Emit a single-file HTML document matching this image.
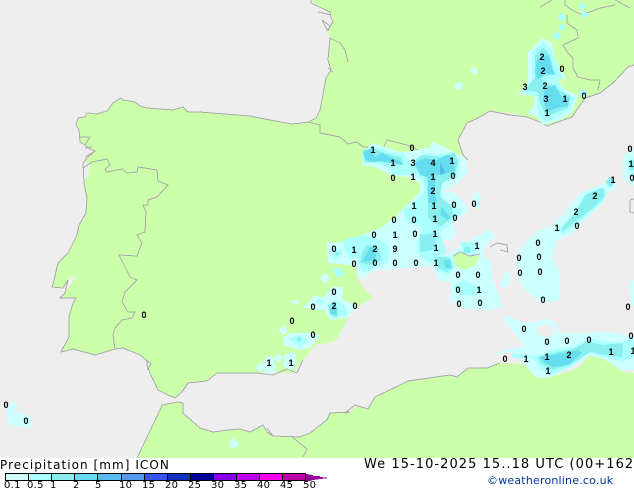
<!DOCTYPE html>
<html><head><meta charset="utf-8"><style>
html,body{margin:0;padding:0;background:#fff}
body{width:634px;height:490px;overflow:hidden;position:relative}
svg{position:absolute;left:0;top:0}
.l text{font:bold 9px "Liberation Sans",sans-serif;text-anchor:middle;fill:#000}
.t{position:absolute;white-space:nowrap;font-family:"DejaVu Sans",sans-serif;color:#000}
</style></head><body>
<svg width="634" height="490" viewBox="0 0 634 490">
<rect width="634" height="458" fill="#eeeeee"/>
<g fill="#ccffaa" shape-rendering="crispEdges">
<polygon points="311,0 634,0 634,65 628,67 613,83 600,93 585,98 572,117 547,126 540,122 527,117 510,113 490,111 480,117 467,123 458,140 463,155 468,170 442,190 420,200 395,222 375,240 358,262 355,267 358,280 365,290 373,298 355,308 347,320 338,337 333,342 315,345 302,362 293,373 267,372 250,373 217,373 207,381 188,383 182,392 175,398 168,395 158,390 150,373 147,365 147,369 151,364 140,355 123,348 115,349 95,355 73,349 61,352 69,337 69,317 73,303 76,298 60,298 65,293 77,275 68,280 63,288 52,287 54,280 58,263 68,253 77,235 79,225 86,213 87,198 84,183 88,175 90,165 85,160 90,155 95,151 90,149 85,145 80,142 79,130 76,125 78,118 85,117 87,113 97,114 107,111 113,103 121,98 123,100 135,102 140,106 147,108 173,110 183,107 188,112 200,112 250,116 270,120 292,124 308,121 316,118 320,110 322,100 326,78 331,70 328,60 330,38 327,30 333,22 332,15"/>
<polygon points="137,458 160,410 162,405 178,402 183,403 183,413 200,428 213,432 228,430 240,429 250,432 263,425 267,432 273,436 300,437 310,433 327,420 330,413 350,412 357,405 368,409 375,397 400,385 408,381 450,375 457,377 468,368 487,368 500,363 527,364 537,365 540,373 550,377 567,372 578,368 592,353 608,362 617,362 623,372 634,373 634,458"/>
</g>
<g fill="none" stroke="#aaaaaa" stroke-width="1" shape-rendering="crispEdges">
<path d="M311,0 311,3 330,12 331,18 333,22 329,28 327,30 322,20 330,26 M318,12 331,15 M329,28 328,31 M330,38 340,43 345,50 348,62 M330,38 328,60 331,70 326,78 322,100 320,110 316,118 309,122 292,124 270,120 250,116"/>
<path d="M328,68 333,72 M510,115 490,111 480,117 467,123 458,140 463,155 468,160 M200,112 188,112 183,107 173,110 147,108 140,106 135,102 123,100 121,98 113,103 107,111 97,114 87,113 85,117 78,118 76,125 79,130 80,142 85,145 90,149 95,151 88,157 83,163 84,183 87,198 86,213 79,225 77,235 68,253 58,263 54,280 52,287 63,288 68,280 65,293 60,298 76,298 73,303 69,317 69,337 61,352 73,349 95,355 115,349 123,348 140,355 151,364 147,370"/>
<path d="M80,137 90,137 85,145 80,142 M250,116 200,112 M85,148 92,147 M85,157 95,151 M147,360 147,365 150,373 158,390 168,395 175,398 182,392 188,383 207,381 217,373 257,373 273,375 287,369 297,373 303,360"/>
<path d="M83,168 92,162 107,159 110,165 105,169 107,172 122,169 127,173 137,172 138,167 157,170 158,181 168,185 157,197 148,200 148,205 143,205 146,212 145,232 137,235 142,243 137,256 119,255 125,267 130,277 137,280 125,292 122,302 128,312 135,312 132,318 122,320 115,328 113,335 115,349"/>
<path d="M308,122 320,125 320,133 340,137 348,144 357,142 363,147 383,148 387,140 407,145 422,152"/>
<path d="M137,458 160,410 162,405 178,402 183,403 183,413 200,428 213,432 228,430 240,429 250,432 263,425 267,432 273,436 300,437 310,433 327,420 330,413 350,412 345,413 355,405 368,409 375,397 400,385 408,381 450,375 457,377 468,368 487,368 500,363 M592,353 596,356 M267,428 273,436 M292,437 307,449 303,457"/>
<path d="M565,0 565,5 572,10 580,14 590,12 600,8 615,5 M567,15 567,23 577,30 578,38 563,45 568,53 573,58 573,68 578,77 590,80 600,80 598,90 M540,7 552,0 M615,0 630,8 M510,115 527,117 540,122 547,126 572,117 585,98 600,93 613,83 628,67 634,65"/>
<path d="M490,247 497,243 507,245 508,252 500,250 M630,200 630,212 634,213 M630,200 634,199"/>
</g>

<g shape-rendering="crispEdges">
<g fill="#ccffff">
<polygon points="362,153 372,143 385,147 400,152 414,151 430,147 432,142 440,145 450,150 465,158 468,172 455,185 442,191 455,193 468,207 467,213 453,222 456,233 449,243 455,250 470,240 477,237 490,228 495,237 487,243 482,255 490,260 493,280 500,297 502,307 487,310 463,308 450,300 452,283 438,280 433,265 420,267 375,270 360,280 355,267 350,265 328,263 327,242 340,243 357,237 382,227 395,217 405,207 420,192 420,183 408,177 390,175 375,167 362,165"/>
<polygon points="530,238 538,230 550,227 563,215 580,193 607,182 615,180 617,187 607,193 603,203 585,220 573,233 557,240 552,257 560,273 560,300 543,303 525,290 520,280 517,263 520,250"/>
<polygon points="505,315 512,318 522,322 537,322 543,318 555,322 558,333 570,333 590,333 607,332 617,333 634,337 634,370 620,370 607,360 590,355 570,368 548,378 535,377 523,362 513,352 490,355 505,350 525,346 512,330 505,322"/>
<polygon points="543,38 552,43 555,58 567,80 557,78 565,90 578,95 572,113 560,120 543,125 537,117 528,113 533,107 535,95 518,95 528,82 528,52"/>
<polygon points="303,307 315,295 323,298 332,287 343,287 343,300 357,305 353,312 347,318 330,320 325,310 313,310"/>
<polygon points="283,338 290,333 310,333 320,335 310,348 300,350 283,345"/>
<polygon points="325,273 330,278 325,284 320,278"/>
<polygon points="289,302 295,300 300,302 295,304"/>
<polygon points="278,330 283,326 288,330 283,335"/>
<polygon points="278,353 283,358 278,363 273,358"/>
<polygon points="266,356 272,356 276,366 276,372 268,374 262,368"/>
<polygon points="260,363 265,368 260,372 255,368"/>
<polygon points="285,354 295,352 297,365 290,370 283,366"/>
<polygon points="477,190 481,197 480,207 475,208 472,200"/>
<polygon points="505,270 510,275 508,287 500,287 503,278"/>
<polygon points="624,155 634,148 634,186 625,180 622,170"/>
<polygon points="630,283 634,280 634,307 630,300"/>
<polygon points="8,405 16,401 17,407 13,412 22,413 32,418 30,428 20,427 10,425 7,415"/>
<polygon points="229,441 233,438 238,442 238,446 233,449 230,447"/>
<polygon points="470,70 474,67 478,71 475,76"/>
<polygon points="454,86 458,82 463,84 462,89 457,90"/>
</g>
<g fill="#eeeeee">
<polygon points="440,240 452,240 455,250 445,257 440,250"/>
<polygon points="537,328 545,323 552,326 555,333 545,338 538,334"/>
</g>
<g fill="#aaffff">
<polygon points="362,152 370,147 382,148 390,153 403,153 407,160 412,163 420,155 428,153 437,155 452,152 460,160 458,177 440,185 443,200 462,210 458,217 447,227 440,232 447,253 437,257 430,263 417,253 418,240 423,227 407,222 403,210 417,200 425,190 422,180 412,175 393,175 390,168 373,163 363,163"/>
<polygon points="365,235 380,240 390,247 388,262 370,270 362,272 357,257 350,260 342,240"/>
<polygon points="332,248 342,250 342,258 333,260"/>
<polygon points="332,268 340,268 345,275 337,277"/>
<polygon points="327,305 333,300 345,305 347,315 332,318"/>
<polygon points="317,298 325,300 322,305 317,303"/>
<polygon points="288,338 300,335 308,340 300,347"/>
<polygon points="557,230 577,210 587,193 603,187 607,193 602,202 582,220 563,235"/>
<polygon points="512,353 523,355 538,356 553,350 573,347 590,338 603,342 623,342 634,338 634,357 622,362 605,357 590,353 570,367 550,375 540,368 533,358 513,358"/>
<polygon points="543,42 552,50 556,62 563,78 556,78 565,92 575,98 570,110 555,118 545,123 538,115 537,97 522,92 532,80 532,52"/>
<polygon points="433,255 450,256 456,265 448,275 435,270"/>
<polygon points="460,242 473,242 480,247 473,255 463,253"/>
<polygon points="453,287 463,280 478,287 480,295 460,295"/>
<polygon points="582,2 586,6 582,11 578,6"/>
<polygon points="585,11 590,15 585,18 580,15"/>
<polygon points="562,13 567,17 562,21 557,17"/>
<polygon points="562,23 566,27 562,31 558,27"/>
<polygon points="557,32 562,36 557,40 552,36"/>
<polygon points="583,89 588,93 583,98 578,93"/>
<polygon points="628,160 634,158 634,178 628,170"/>
</g>
<g fill="#88eeee">
<polygon points="363,150 372,148 382,152 402,158 403,165 390,163 377,162 365,162"/>
<polygon points="412,162 423,155 440,157 455,153 458,163 455,175 442,183 440,197 452,207 453,217 440,227 428,218 428,198 427,178 420,175"/>
<polygon points="420,235 437,233 433,250 420,252"/>
<polygon points="367,245 378,247 382,260 370,265 360,263 362,253"/>
<polygon points="334,251 340,253 337,256"/>
<polygon points="328,305 335,303 338,310 337,318 330,315"/>
<polygon points="296,339 299,336 302,339 299,342"/>
<polygon points="562,228 575,213 585,195 603,188 605,195 597,205 577,220 562,232"/>
<polygon points="610,177 615,182 610,188 605,182"/>
<polygon points="538,357 557,352 573,349 587,342 603,345 623,343 622,357 607,355 590,352 570,365 552,370 540,363"/>
<polygon points="543,47 550,55 553,68 556,75 548,75 540,78 555,88 570,96 568,108 555,113 547,118 540,103 538,92 525,90 535,78 535,55"/>
<polygon points="437,257 450,258 453,268 447,272 438,268"/>
<polygon points="464,247 470,247 470,253 464,253"/>
<polygon points="630,161 634,160 634,170 630,170"/>
</g>
<g fill="#66ddee">
<polygon points="363,152 372,149 375,157 382,153 392,158 402,162 402,165 380,161 373,162 365,160"/>
<polygon points="415,163 425,158 437,160 447,155 453,157 455,170 443,175 435,175 435,192 437,203 428,203 428,177 420,175"/>
<polygon points="442,207 450,217 448,220 440,215"/>
<polygon points="370,247 377,250 375,260 362,262 367,253"/>
<polygon points="537,60 548,55 552,68 555,74 545,74 538,80 535,72"/>
<polygon points="545,88 555,85 562,98 570,97 568,106 556,108 548,112 543,100"/>
<polygon points="540,357 553,355 565,353 578,350 582,353 568,365 553,367 545,363"/>
<polygon points="444,260 450,260 451,268 445,268"/>
<polygon points="330,309 336,306 337,315 331,314"/>
</g>
<polygon fill="#55bbee" points="440,162 445,172 440,175"/>
<polygon fill="#ccffaa" points="453,257 460,252 470,256 480,256 475,266 462,270 456,266"/>
<path d="M453,256 460,252 470,256 480,254" fill="none" stroke="#aaaaaa"/>
</g>

<g class="l">
<text x="373" y="153">1</text><text x="412" y="151">0</text><text x="393" y="166">1</text><text x="413" y="166">3</text><text x="433" y="166">4</text><text x="452" y="164">1</text><text x="393" y="181">0</text><text x="413" y="180">1</text><text x="433" y="180">1</text><text x="453" y="179">0</text><text x="433" y="194">2</text><text x="414" y="209">1</text><text x="434" y="209">1</text><text x="454" y="208">0</text><text x="474" y="207">0</text><text x="394" y="223">0</text><text x="414" y="223">0</text><text x="435" y="222">1</text><text x="455" y="221">0</text><text x="374" y="238">0</text><text x="395" y="238">1</text><text x="415" y="237">0</text><text x="435" y="237">1</text><text x="354" y="253">1</text><text x="375" y="252">2</text><text x="395" y="252">9</text><text x="436" y="251">1</text><text x="477" y="249">1</text><text x="354" y="267">0</text><text x="375" y="266">0</text><text x="395" y="266">0</text><text x="416" y="266">0</text><text x="436" y="266">1</text><text x="334" y="252">0</text>
<text x="458" y="278">0</text><text x="478" y="278">0</text><text x="458" y="293">0</text><text x="479" y="293">1</text><text x="459" y="307">0</text><text x="480" y="306">0</text><text x="519" y="261">0</text><text x="538" y="246">0</text><text x="539" y="260">0</text><text x="520" y="276">0</text><text x="540" y="275">0</text><text x="543" y="303">0</text><text x="628" y="310">0</text><text x="557" y="231">1</text><text x="577" y="229">0</text><text x="576" y="215">2</text><text x="595" y="199">2</text><text x="613" y="183">1</text><text x="630" y="152">0</text><text x="631" y="167">1</text><text x="632" y="181">0</text>
<text x="524" y="332">0</text><text x="547" y="345">0</text><text x="567" y="344">0</text><text x="589" y="343">0</text><text x="631" y="339">0</text><text x="505" y="362">0</text><text x="526" y="362">1</text><text x="547" y="360">1</text><text x="569" y="358">2</text><text x="611" y="355">1</text><text x="633" y="354">1</text><text x="548" y="374">1</text>
<text x="334" y="295">0</text><text x="313" y="310">0</text><text x="334" y="309">2</text><text x="355" y="309">0</text><text x="292" y="324">0</text><text x="313" y="338">0</text><text x="269" y="366">1</text><text x="291" y="366">1</text>
<text x="542" y="60">2</text><text x="562" y="72">0</text><text x="543" y="74">2</text><text x="525" y="90">3</text><text x="545" y="89">2</text><text x="546" y="102">3</text><text x="565" y="102">1</text><text x="584" y="99">0</text><text x="547" y="116">1</text>
<text x="144" y="318">0</text><text x="6" y="408">0</text><text x="26" y="424">0</text>
</g>

<g shape-rendering="crispEdges" stroke="#000" stroke-width="1">
<rect x="5.5" y="473.5" width="23" height="7" fill="#d4fff8"/>
<rect x="28.5" y="473.5" width="23" height="7" fill="#aaffff"/>
<rect x="51.5" y="473.5" width="23" height="7" fill="#88eeee"/>
<rect x="74.5" y="473.5" width="23" height="7" fill="#66ddee"/>
<rect x="97.5" y="473.5" width="24" height="7" fill="#55bbee"/>
<rect x="121.5" y="473.5" width="23" height="7" fill="#5599ee"/>
<rect x="144.5" y="473.5" width="23" height="7" fill="#3355ee"/>
<rect x="167.5" y="473.5" width="23" height="7" fill="#1133bb"/>
<rect x="190.5" y="473.5" width="23" height="7" fill="#000099"/>
<rect x="213.5" y="473.5" width="23" height="7" fill="#8800ee"/>
<rect x="236.5" y="473.5" width="23" height="7" fill="#bb00ee"/>
<rect x="259.5" y="473.5" width="23" height="7" fill="#ff00ee"/>
<rect x="282.5" y="473.5" width="23" height="7" fill="#bb00aa"/>
</g>
<polygon points="306,474 313,475 313,476 320,476 320,477 329,478 320,479 313,480 306,482" fill="#990099" shape-rendering="crispEdges"/>
</svg>
<div class="t" style="left:0;top:457px;font-size:12px;line-height:16px;letter-spacing:1.05px">Precipitation [mm] ICON</div>
<div class="t" style="left:4px;top:481px;font-size:10px;line-height:10px;letter-spacing:.3px;width:20px">0.1</div>
<div class="t" style="left:27px;top:481px;font-size:10px;line-height:10px;letter-spacing:.3px">0.5</div>
<div class="t" style="left:50px;top:481px;font-size:10px;line-height:10px">1</div>
<div class="t" style="left:73px;top:481px;font-size:10px;line-height:10px">2</div>
<div class="t" style="left:95px;top:481px;font-size:10px;line-height:10px">5</div>
<div class="t" style="left:119px;top:481px;font-size:10px;line-height:10px;letter-spacing:.3px">10</div>
<div class="t" style="left:142px;top:481px;font-size:10px;line-height:10px;letter-spacing:.3px">15</div>
<div class="t" style="left:165px;top:481px;font-size:10px;line-height:10px;letter-spacing:.3px">20</div>
<div class="t" style="left:188px;top:481px;font-size:10px;line-height:10px;letter-spacing:.3px">25</div>
<div class="t" style="left:211px;top:481px;font-size:10px;line-height:10px;letter-spacing:.3px">30</div>
<div class="t" style="left:234px;top:481px;font-size:10px;line-height:10px;letter-spacing:.3px">35</div>
<div class="t" style="left:257px;top:481px;font-size:10px;line-height:10px;letter-spacing:.3px">40</div>
<div class="t" style="left:280px;top:481px;font-size:10px;line-height:10px;letter-spacing:.3px">45</div>
<div class="t" style="left:303px;top:481px;font-size:10px;line-height:10px;letter-spacing:.3px">50</div>
<div class="t" style="left:364px;top:457px;font-size:13px;line-height:16px;letter-spacing:1.05px">We 15-10-2025 15..18 UTC (00+162</div>
<div class="t" style="left:487px;top:474px;font-size:11px;line-height:14px;color:#003399;letter-spacing:.2px">©weatheronline.co.uk</div>
</body></html>
